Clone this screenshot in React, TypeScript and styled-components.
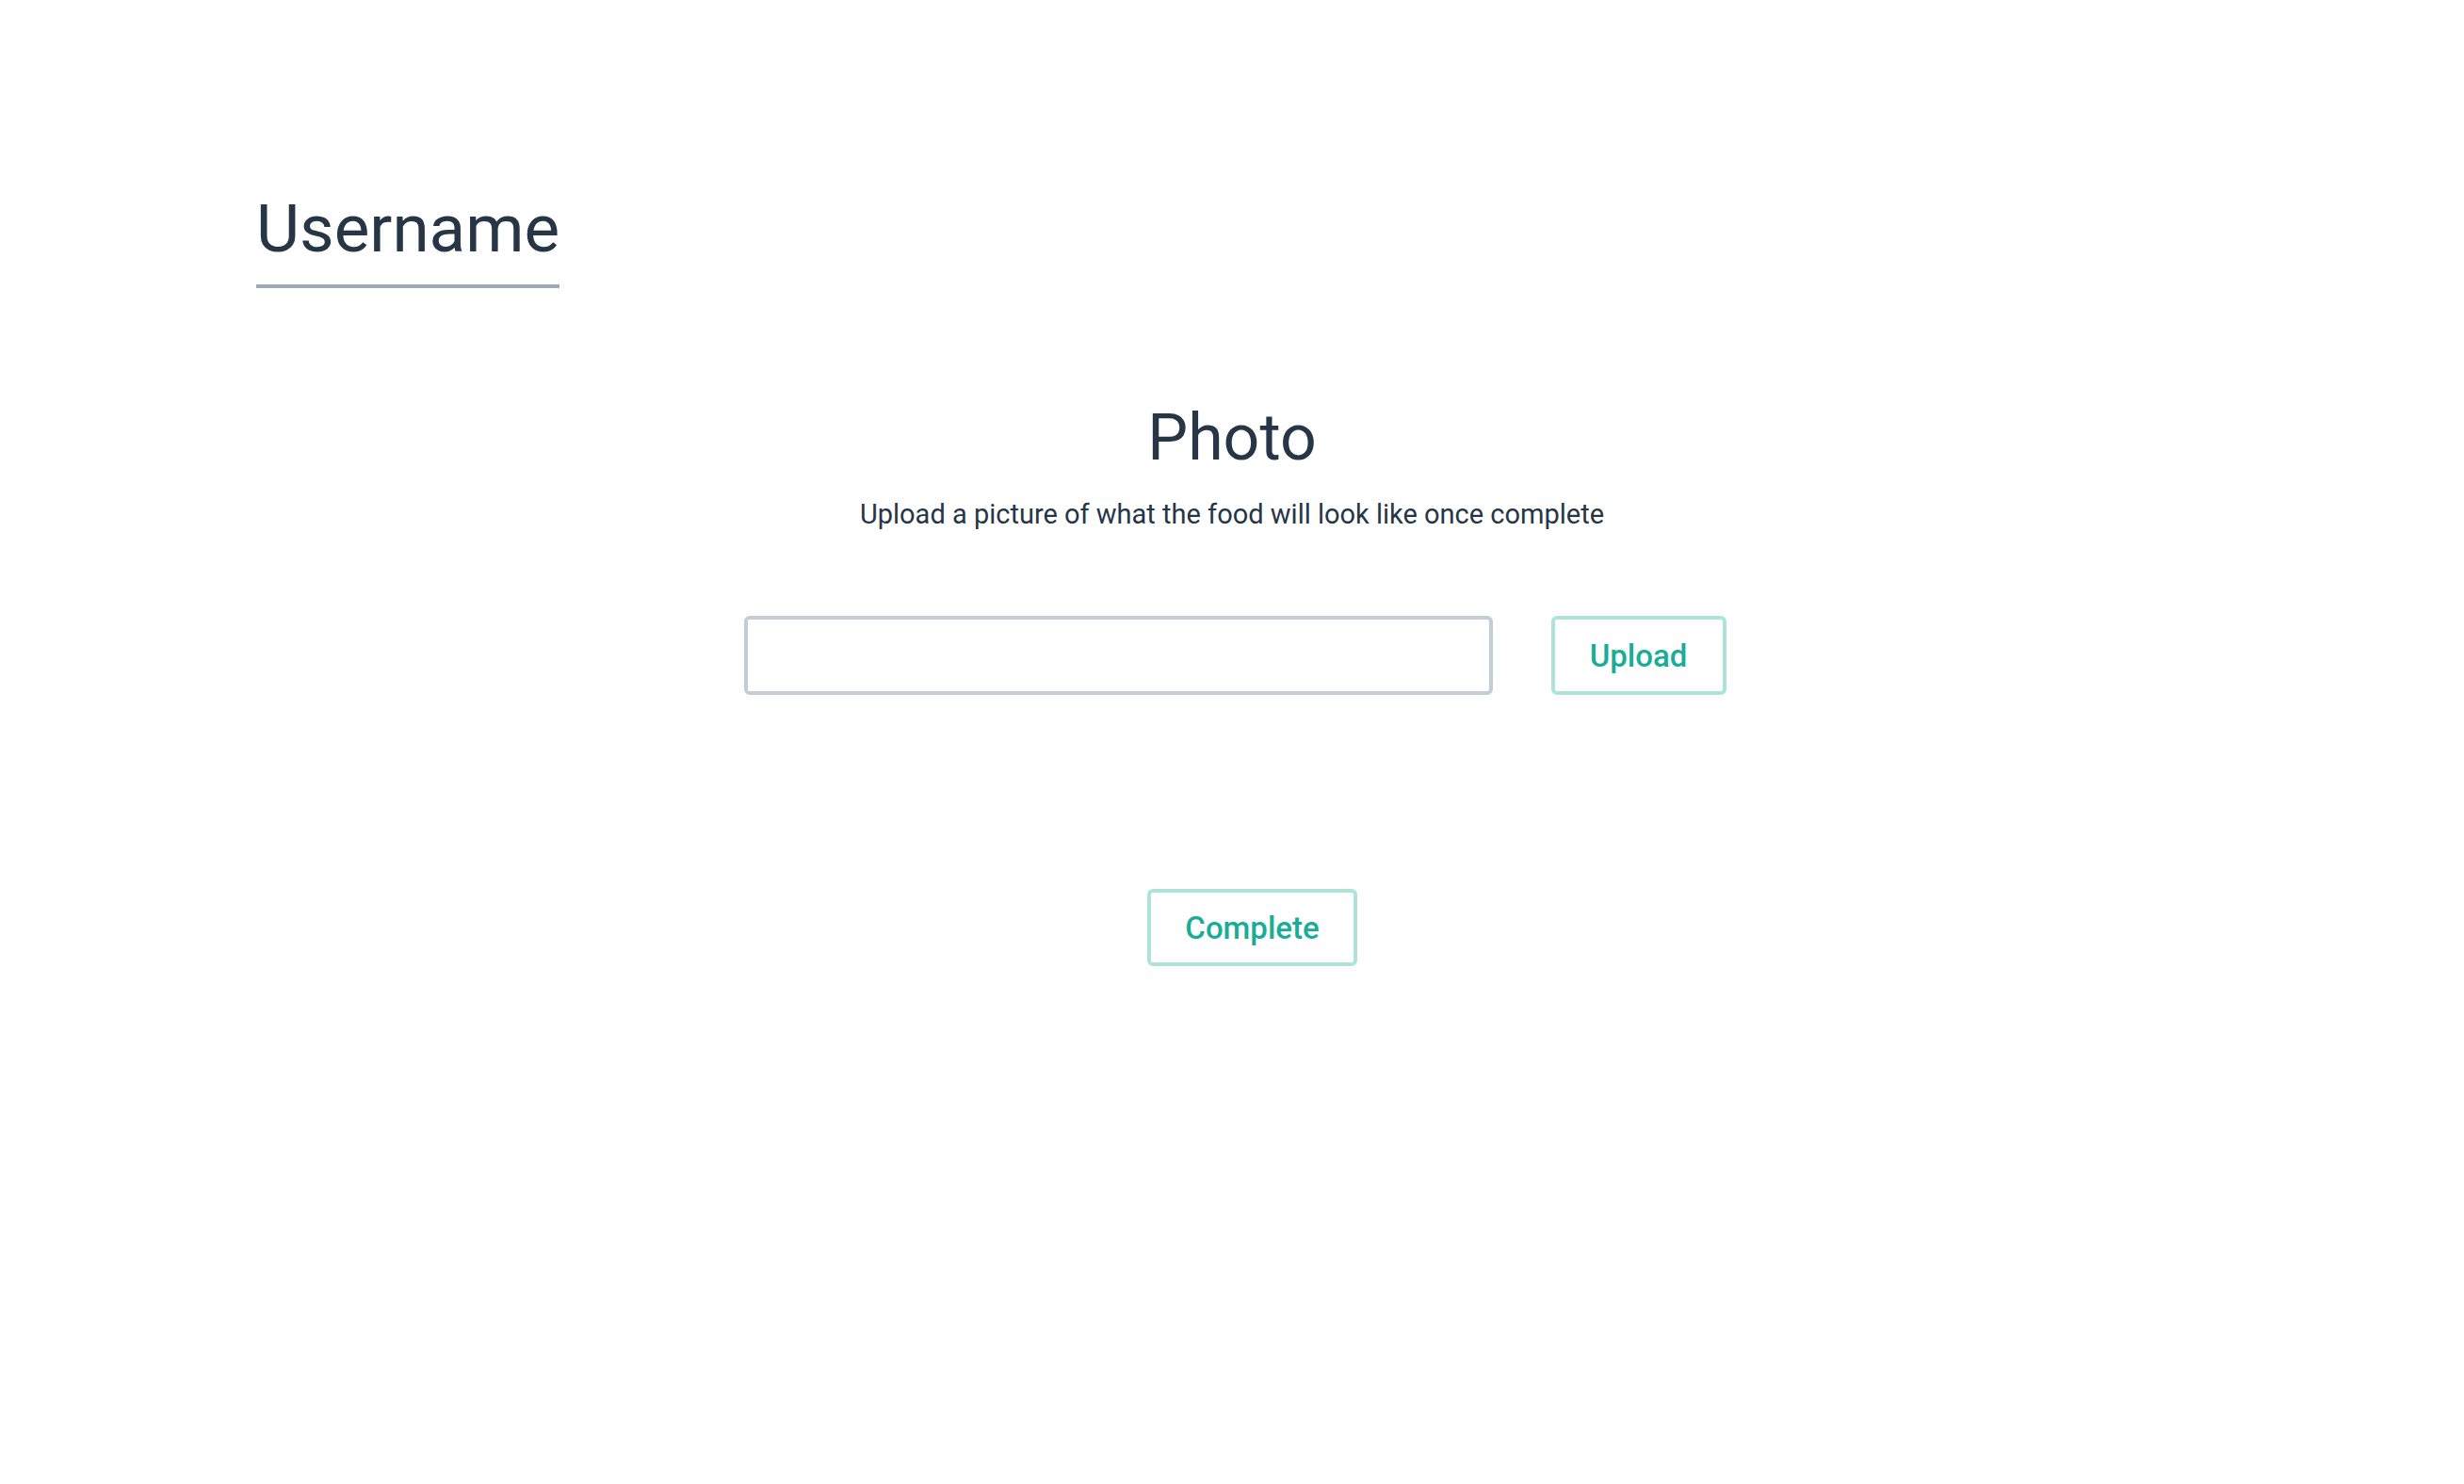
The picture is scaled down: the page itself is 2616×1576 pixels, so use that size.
import React from "react";
import styled, { createGlobalStyle } from "styled-components";

const GlobalStyle = createGlobalStyle`
  html, body {
    margin: 0;
    padding: 0;
    background: #ffffff;
  }
  body {
    font-family: Roboto, "Liberation Sans", Arial, sans-serif;
    color: #263646;
  }
  * { box-sizing: border-box; }
`;

const Page = styled.main`
  min-height: 1576px;
  padding: 207px 272px 0 272px;
  display: flex;
  flex-direction: column;
`;

const Header = styled.header`
  display: flex;
`;

const Title = styled.h1`
  margin: 0;
  font-size: 71px;
  line-height: 1;
  font-weight: 400;
  color: #263646;
  padding-bottom: 24px;
  border-bottom: 4px solid #9daab6;
`;

const Section = styled.section`
  display: flex;
  flex-direction: column;
  align-items: center;
  margin-top: 125px;
`;

const SectionTitle = styled.h2`
  margin: 0;
  font-size: 68px;
  line-height: 1;
  font-weight: 400;
  color: #263646;
`;

const Subtitle = styled.p`
  margin: 33px 0 0 0;
  font-size: 29px;
  line-height: 1;
  font-weight: 400;
  color: #263646;
`;

const UploadRow = styled.div`
  display: flex;
  align-items: center;
  gap: 62px;
  margin-top: 93px;
  padding-left: 6px;
`;

const FileInput = styled.input`
  width: 795px;
  height: 84px;
  border: 4px solid #c4cdd5;
  border-radius: 6px;
  background: #ffffff;
  outline: none;
  padding: 0 20px;
  font-family: inherit;
  font-size: 28px;
  color: #263646;
`;

const OutlineButton = styled.button<{ $width: number; $height: number }>`
  width: ${(p) => p.$width}px;
  height: ${(p) => p.$height}px;
  display: inline-flex;
  align-items: center;
  justify-content: center;
  padding: 0;
  background: #ffffff;
  border: 4px solid #aee3da;
  border-radius: 6px;
  color: #19ad97;
  font-family: Roboto, "Liberation Sans", Arial, sans-serif;
  font-size: 33px;
  font-weight: 500;
  line-height: 1;
  cursor: pointer;
`;

const Footer = styled.div`
  display: flex;
  justify-content: center;
  margin-top: 206px;
  padding-left: 43px;
`;

export default function App() {
  return (
    <>
      <GlobalStyle />
      <Page>
        <Header>
          <Title>Username</Title>
        </Header>
        <Section>
          <SectionTitle>Photo</SectionTitle>
          <Subtitle>Upload a picture of what the food will look like once complete</Subtitle>
          <UploadRow>
            <FileInput type="text" aria-label="Photo URL" />
            <OutlineButton $width={186} $height={84}>Upload</OutlineButton>
          </UploadRow>
        </Section>
        <Footer>
          <OutlineButton $width={223} $height={82}>Complete</OutlineButton>
        </Footer>
      </Page>
    </>
  );
}
